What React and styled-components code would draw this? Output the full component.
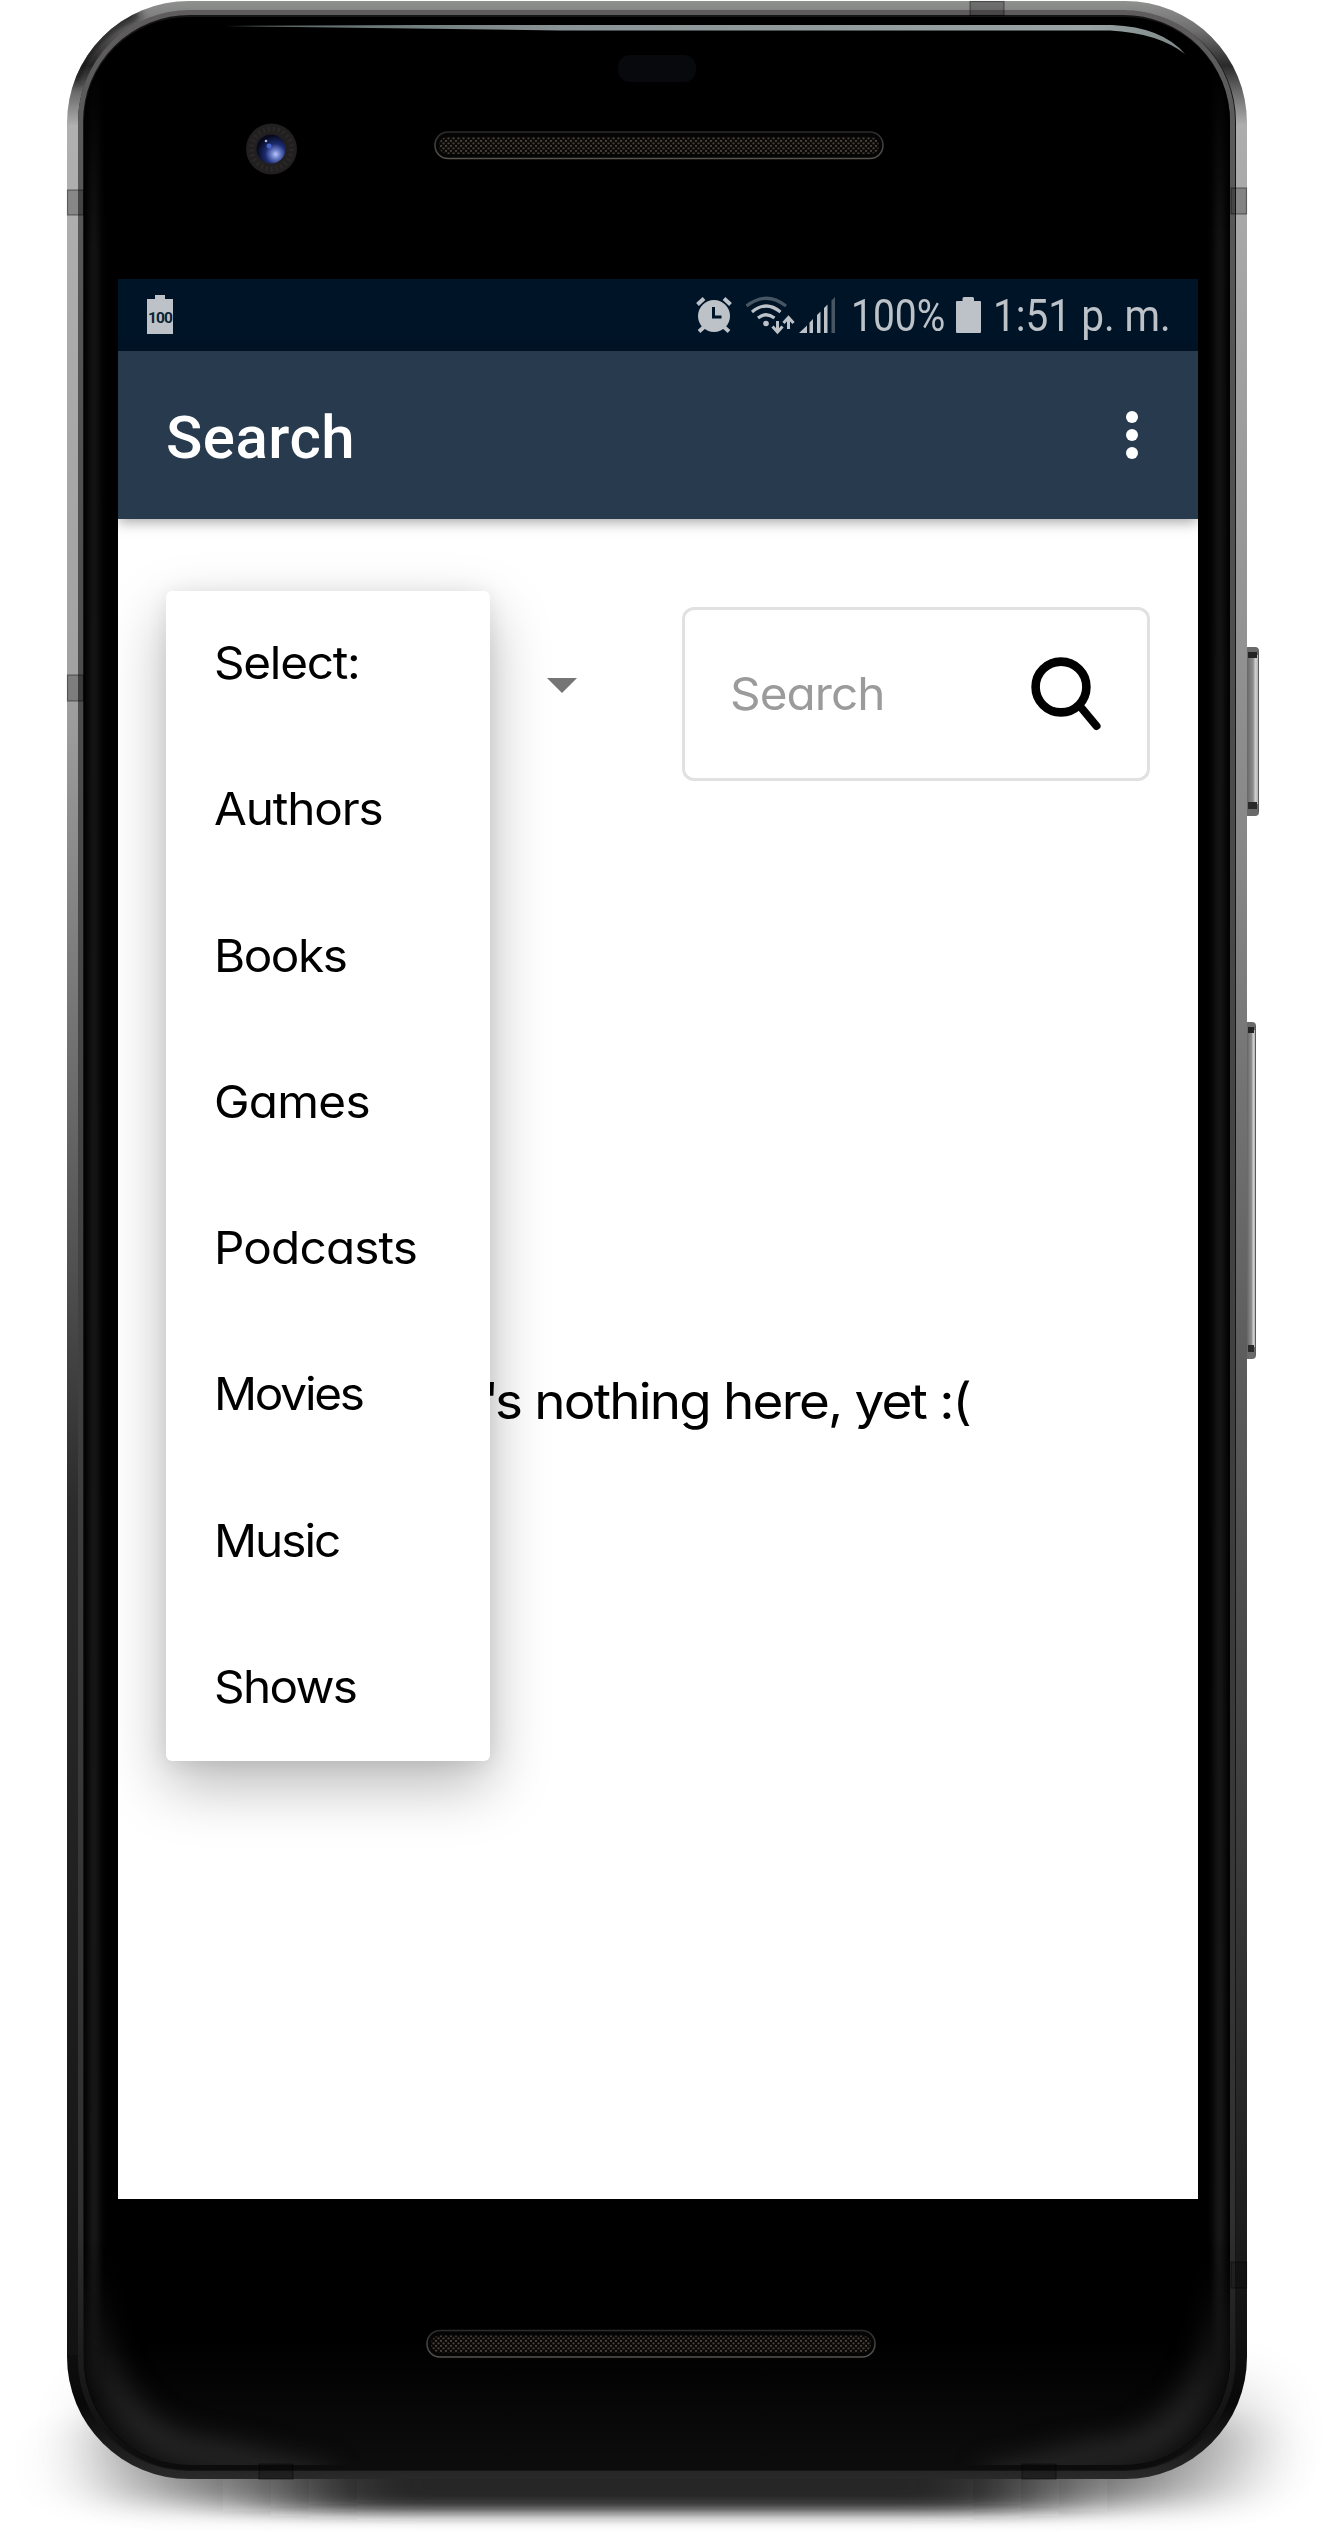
import React from 'react';
import styled, { createGlobalStyle, css } from 'styled-components';

const Global = createGlobalStyle`
  html, body { margin: 0; padding: 0; background: #fff; }
  *, *::before, *::after { box-sizing: border-box; }
`;

const bookFont = css`
  font-family: Inter, "Liberation Sans", sans-serif;
  font-weight: 380;
  font-feature-settings: "cv11";
`;

const Stage = styled.div`
  position: relative;
  width: 1330px;
  height: 2532px;
  overflow: hidden;
  background: #fff;
  display: flex;
  padding: 1px 0 0 67px;
`;

const Hardware = styled.svg`
  position: absolute;
  inset: 0;
  width: 1330px;
  height: 2532px;
`;

const Phone = styled.main`
  position: relative;
  width: 1180px;
  height: 2478px;
  padding: 278px 49px 280px 51px;
  display: flex;
  flex-direction: column;
`;

const Screen = styled.section`
  width: 1080px;
  height: 1920px;
  flex: none;
  background: #fff;
  overflow: hidden;
  display: flex;
  flex-direction: column;
`;

const StatusBar = styled.header`
  height: 72px;
  flex: none;
  background: #001427;
  color: #bcc2c7;
  display: flex;
  align-items: center;
  padding: 0 29px 0 28px;
`;

const StatusIcon = styled.svg`
  display: block;
  flex: none;
  overflow: visible;
  width: ${(p) => p.$w}px;
  height: ${(p) => p.$h}px;
  margin-left: ${(p) => p.$gap || 0}px;
`;

const StatusText = styled.span`
  flex: none;
  width: ${(p) => p.$w}px;
  margin-left: ${(p) => p.$gap}px;
  font: 400 45px/74px Roboto, sans-serif;
  height: 72px;
  white-space: pre;
  span {
    display: inline-block;
    transform: scaleX(${(p) => p.$scale});
    transform-origin: left;
  }
`;

const Spacer = styled.div`
  flex: 1;
`;

const AppBar = styled.div`
  height: 168px;
  flex: none;
  position: relative;
  background: #273a4e;
  display: flex;
  align-items: center;
  justify-content: space-between;
  padding: 4px 60px 0 48px;
  box-shadow: 0 3px 13px rgba(0, 0, 0, 0.36);
`;

const Title = styled.h1`
  margin: 0;
  padding-top: 2px;
  color: #fff;
  font: 500 60px/72px Roboto, sans-serif;
  letter-spacing: 0.5px;
`;

const Overflow = styled.button`
  border: 0;
  background: none;
  padding: 0 0 4px;
  display: flex;
  flex-direction: column;
  gap: 6px;
`;

const Dot = styled.i`
  width: 12px;
  height: 12px;
  border-radius: 50%;
  background: #fff;
`;

const Content = styled.div`
  flex: 1;
  position: relative;
  display: flex;
  flex-direction: column;
`;

const Filters = styled.div`
  display: flex;
  justify-content: flex-end;
  align-items: flex-start;
  padding: 88px 48px 0 0;
`;

const Caret = styled.svg`
  width: 30px;
  height: 15px;
  margin: 71px 105px 0 0;
`;

const SearchBox = styled.div`
  width: 468px;
  height: 174px;
  border: 3px solid #e1e1e1;
  border-radius: 12px;
  display: flex;
  align-items: center;
  justify-content: space-between;
  padding: 0 45px 1px 45px;
`;

const WideText = styled.span`
  display: inline-block;
  transform: scaleX(1.06);
  transform-origin: ${(p) => p.$from || 'left'};
  letter-spacing: ${(p) => p.$track}px;
`;

const Apostrophe = styled.span`
  letter-spacing: -4px;
`;

const Placeholder = styled.span`
  ${bookFont}
  font-size: 45px;
  line-height: 60px;
  color: #9b9b9b;
`;

const Glass = styled.svg`
  width: 72px;
  height: 76px;
`;

const Empty = styled.p`
  ${bookFont}
  margin: 586px 228px 0 0;
  text-align: right;
  font-size: 50px;
  line-height: 68px;
  color: #000;
  white-space: nowrap;
`;

const Menu = styled.ul`
  position: absolute;
  left: 48px;
  top: 72px;
  width: 324px;
  margin: 0;
  padding: 0;
  list-style: none;
  background: #fff;
  border-radius: 6px;
  box-shadow: 0 24px 60px rgba(0, 0, 0, 0.28), 0 2px 20px rgba(0, 0, 0, 0.08);
`;

const Item = styled.li`
  ${bookFont}
  height: 146.25px;
  padding: 0 0 0 47.5px;
  font-size: 45px;
  line-height: 144px;
  color: #000;
  white-space: nowrap;
`;

const ITEMS = [
  ['Select:', -1.2],
  ['Authors', -1.1],
  ['Books', -1.4],
  ['Games', -0.7],
  ['Podcasts', -0.8],
  ['Movies', -2.1],
  ['Music', -1.9],
  ['Shows', -1.6],
];

function Speaker({ x, y }) {
  return (
    <g>
      <rect x={x} y={y} width="448" height="26.500" rx="13" fill="#050505" stroke="url(#rim)" strokeWidth="1.600" />
      <rect x={x + 4} y={y + 5} width="440" height="17" rx="8.500" fill="url(#mesh)" />
    </g>
  );
}

function SideButton({ y, w, h }) {
  return (
    <g>
      <rect x="1244" y={y} width={w + 3} height={h} rx="4" fill="#6a6a6a" />
      <rect x="1248" y={y + 8} width={w - 2} height={h - 20} fill="url(#button)" />
      <rect x="1248" y={y + 5} width={w - 3} height="6" fill="#222" />
      <rect x="1248" y={y + h - 14} width={w - 3} height="7" fill="#2a2a2a" />
      <rect x={1247 + w - 1} y={y + 4} width="1" height={h - 8} fill="#5a5a5a" />
    </g>
  );
}

function Body() {
  return (
    <Hardware viewBox="0 0 1330 2532" aria-hidden="true">
      <defs>
        <linearGradient id="metal" x1="0" y1="0" x2="0" y2="1">
          <stop offset="0" stopColor="#8f918f" />
          <stop offset="0.012" stopColor="#6e6e6e" />
          <stop offset="0.026" stopColor="#2a2a2a" />
          <stop offset="0.036" stopColor="#666" />
          <stop offset="0.05" stopColor="#adadad" />
          <stop offset="0.15" stopColor="#a0a0a0" />
          <stop offset="0.35" stopColor="#868686" />
          <stop offset="0.55" stopColor="#5c5c5c" />
          <stop offset="0.75" stopColor="#3a3a3a" />
          <stop offset="0.9" stopColor="#1c1c1c" />
          <stop offset="0.97" stopColor="#080808" />
          <stop offset="1" stopColor="#2a2a2a" />
        </linearGradient>
        <linearGradient id="metalLeft" x1="0" y1="0" x2="0" y2="1">
          <stop offset="0" stopColor="#b0b0b0" />
          <stop offset="0.25" stopColor="#a2a2a2" />
          <stop offset="0.45" stopColor="#666" />
          <stop offset="0.62" stopColor="#2b2b2b" />
          <stop offset="0.9" stopColor="#191919" />
          <stop offset="1" stopColor="#121212" />
        </linearGradient>
        <linearGradient id="lip" x1="0" y1="0" x2="0" y2="1">
          <stop offset="0" stopColor="#5e5c5c" />
          <stop offset="0.3" stopColor="#4c4c4c" />
          <stop offset="0.9" stopColor="#303030" />
          <stop offset="1" stopColor="#0c0c0c" />
        </linearGradient>
        <linearGradient id="glow" x1="0" y1="0" x2="0" y2="1">
          <stop offset="0" stopColor="#000" />
          <stop offset="1" stopColor="#0d0d0d" />
        </linearGradient>
        <linearGradient id="edge" gradientUnits="userSpaceOnUse" x1="0" y1="60" x2="0" y2="2400">
          <stop offset="0" stopColor="#000" />
          <stop offset="0.08" stopColor="#151515" />
          <stop offset="0.93" stopColor="#1b1b1b" />
          <stop offset="1" stopColor="#1b1b1b" stopOpacity="0" />
        </linearGradient>
        <linearGradient id="corner" gradientUnits="userSpaceOnUse" x1="0" y1="2260" x2="0" y2="2430">
          <stop offset="0" stopColor="#262626" stopOpacity="0" />
          <stop offset="1" stopColor="#262626" />
        </linearGradient>
        <linearGradient id="glare" x1="0" y1="0" x2="1" y2="0">
          <stop offset="0" stopColor="#54605f" />
          <stop offset="0.35" stopColor="#8a9496" />
          <stop offset="0.9" stopColor="#9aa4a5" />
          <stop offset="1" stopColor="#7d8788" />
        </linearGradient>
        <linearGradient id="rim" x1="0" y1="0" x2="0" y2="1">
          <stop offset="0" stopColor="#2b2b2b" />
          <stop offset="1" stopColor="#57524e" />
        </linearGradient>
        <linearGradient id="button" x1="0" y1="0" x2="1" y2="0">
          <stop offset="0" stopColor="#6f6f6f" />
          <stop offset="0.5" stopColor="#8c8c8c" />
          <stop offset="0.75" stopColor="#d0d0d0" />
          <stop offset="1" stopColor="#b5b5b5" />
        </linearGradient>
        <radialGradient id="lens" cx="0.66" cy="0.68" r="0.65">
          <stop offset="0" stopColor="#b9c5f8" />
          <stop offset="0.25" stopColor="#6578c4" />
          <stop offset="0.55" stopColor="#1c2b70" />
          <stop offset="1" stopColor="#060a1c" />
        </radialGradient>
        <pattern id="mesh" width="5" height="5" patternUnits="userSpaceOnUse">
          <rect width="5" height="5" fill="#0a0908" />
          <rect x="0" y="0" width="2" height="1.800" fill="#4b453b" />
          <rect x="2.500" y="2.500" width="2" height="1.800" fill="#4b453b" />
        </pattern>
        <filter id="blur3" filterUnits="userSpaceOnUse" x="40" y="-20" width="220" height="220"><feGaussianBlur stdDeviation="5" /></filter>
        <filter id="blur4" colorInterpolationFilters="sRGB" filterUnits="userSpaceOnUse" x="60" y="0" width="1200" height="2500"><feGaussianBlur stdDeviation="3.500" /></filter>
        <filter id="blur12" colorInterpolationFilters="sRGB" filterUnits="userSpaceOnUse" x="0" y="2100" width="1330" height="460"><feGaussianBlur stdDeviation="13" /></filter>
        <filter id="core" filterUnits="userSpaceOnUse" x="0" y="2300" width="1330" height="232"><feGaussianBlur stdDeviation="60 8" /></filter>
        <filter id="mid" filterUnits="userSpaceOnUse" x="0" y="2300" width="1330" height="232"><feGaussianBlur stdDeviation="55 12" /></filter>
        <filter id="haze" filterUnits="userSpaceOnUse" x="0" y="2200" width="1330" height="332"><feGaussianBlur stdDeviation="32 30" /></filter>
        <clipPath id="bodyClip"><rect x="67" y="1" width="1180" height="2478" rx="122" /></clipPath>
        <clipPath id="glassClip"><rect x="84" y="17" width="1146" height="2448" rx="106" /></clipPath>
      </defs>

      <rect x="90" y="2390" width="1180" height="85" rx="50" fill="#000" opacity="0.18" filter="url(#haze)" />
      <rect x="130" y="2420" width="1070" height="86" rx="30" fill="#000" opacity="0.42" filter="url(#mid)" />
      <rect x="290" y="2420" width="750" height="91" fill="#202020" opacity="0.96" filter="url(#core)" />

      <SideButton y={647} w={12} h={169} />
      <SideButton y={1022} w={9} h={337} />

      <g clipPath="url(#bodyClip)">
        <rect x="67" y="1" width="1180" height="2478" fill="url(#metal)" />
        <rect x="67" y="125" width="13" height="2230" fill="url(#metalLeft)" />
        <path d="M72 82Q86 30 138 12" fill="none" stroke="#141414" strokeWidth="16" opacity="0.85" filter="url(#blur3)" />
      </g>
      <rect x="78" y="11" width="1158" height="2460" rx="111" fill="#151515" />
      <rect x="80.500" y="12.500" width="1152" height="2455" rx="109" fill="none" stroke="url(#lip)" strokeWidth="5" />
      <rect x="84" y="17" width="1146" height="2448" rx="105" fill="#000" />
      <g clipPath="url(#glassClip)">
        <rect x="84" y="2340" width="1146" height="130" fill="url(#glow)" />
        <path d="M94 60V2400M1219.500 60V2400" fill="none" stroke="url(#edge)" strokeWidth="10" filter="url(#blur4)" />
        <path d="M88 2250Q88 2450 220 2456L330 2484" fill="none" stroke="url(#corner)" strokeWidth="30" filter="url(#blur12)" />
        <path d="M1226 2250Q1226 2450 1094 2456L984 2484" fill="none" stroke="url(#corner)" strokeWidth="30" filter="url(#blur12)" />
      </g>
      <path d="M225 26L420 25H1112Q1162 27 1185 54Q1158 33 1110 30.500H560Z" fill="url(#glare)" />

      <g fill="#000" fillOpacity="0.22" stroke="#000" strokeOpacity="0.4" strokeWidth="1.200">
        <rect x="67.500" y="190" width="16" height="25" />
        <rect x="67.500" y="675" width="16" height="26" />
        <rect x="1231" y="188" width="15.500" height="26" />
        <rect x="1231" y="2262" width="15.500" height="26" />
        <rect x="970" y="1.500" width="34" height="14" />
        <rect x="259" y="2464" width="34" height="15" />
        <rect x="1022" y="2464" width="34" height="15" />
      </g>

      <rect x="618" y="55" width="78" height="27" rx="12" fill="#08090d" />
      <Speaker x={435} y={132} />
      <Speaker x={427} y={2330.5} />
      <circle cx="271.500" cy="149" r="25.500" fill="#211f1f" />
      <circle cx="271.500" cy="149" r="20" fill="none" stroke="#2b2828" strokeWidth="5" strokeDasharray="2 3" />
      <circle cx="271" cy="149" r="14.500" fill="url(#lens)" />
      <circle cx="269" cy="146" r="2.500" fill="#4562c4" />
      <circle cx="266" cy="141" r="1.300" fill="#a9b6e6" />
    </Hardware>
  );
}

function Status() {
  return (
    <StatusBar>
      <StatusIcon $w={28} $h={40} viewBox="0 0 28 40">
        <path d="M1 4H9V0H19V4H27V39H1Z" fill="#bcc2c7" />
        <text x="14" y="27.500" textAnchor="middle" fontFamily="Roboto, sans-serif" fontWeight="700" fontSize="15.500" letterSpacing="-0.900" fill="#0b2233">100</text>
      </StatusIcon>
      <Spacer />
      <StatusIcon $w={36} $h={36} viewBox="0 0 36 36">
        <circle cx="18" cy="19" r="16" fill="currentColor" />
        <path d="M1.500 7.500L8 1.500M34.500 7.500L28 1.500M3 34.500L8 30M33 34.500L28 30" stroke="currentColor" strokeWidth="4" />
        <path d="M17.500 10V20H25.500" fill="none" stroke="#001427" strokeWidth="3" />
      </StatusIcon>
      <StatusIcon $w={50} $h={36} $gap={13} viewBox="0 0 50 36">
        <g fill="none" stroke="currentColor" strokeWidth="3.200">
          <path d="M1.500 9Q21 -6.500 41 9" opacity="0.38" />
          <path d="M7 15Q21 3 35.500 15" />
          <path d="M13 21Q21 14.500 29.500 21" />
        </g>
        <circle cx="21" cy="26.500" r="2.800" fill="currentColor" />
        <path d="M32.500 24V34M27.500 29.500L32.500 35L37.500 29.500M43.500 32V21M38.500 26L43.500 20.500L48.500 26" fill="none" stroke="currentColor" strokeWidth="3" />
      </StatusIcon>
      <StatusIcon $w={37} $h={36} $gap={4} viewBox="0 0 37 36">
        <path d="M0 36L8 28.500V36ZM10.500 36V25.500L14 22V36ZM18 36V18L21.500 14.500V36ZM25 36V11L28.500 7.500V36Z" fill="currentColor" />
        <path d="M32.500 36V3.500L36 0V36Z" fill="currentColor" opacity="0.38" />
      </StatusIcon>
      <StatusText $w={94} $gap={15} $scale={0.865}><span>100%</span></StatusText>
      <StatusIcon $w={25} $h={36} $gap={11} viewBox="0 0 25 36">
        <path d="M1 4H6.500V1.500Q6.500 0 8 0H16.500Q18 0 18 1.500V4H24Q25 4 25 5V35Q25 36 24 36H1Q0 36 0 35V5Q0 4 1 4Z" fill="currentColor" />
      </StatusIcon>
      <StatusText $w={176} $gap={12} $scale={0.9}><span>1:51 p. m.</span></StatusText>
    </StatusBar>
  );
}

export default function App() {
  return (
    <>
      <Global />
      <Stage>
        <Body />
        <Phone>
          <Screen>
            <Status />
            <AppBar>
              <Title>Search</Title>
              <Overflow aria-label="More options"><Dot /><Dot /><Dot /></Overflow>
            </AppBar>
            <Content>
              <Filters>
                <Caret viewBox="0 0 30 15"><path d="M0 0H30L15 15Z" fill="#757575" /></Caret>
                <SearchBox>
                  <Placeholder><WideText $track={-0.9}>Search</WideText></Placeholder>
                  <Glass viewBox="0 0 72 76">
                    <circle cx="31" cy="31" r="25.400" fill="none" stroke="#000" strokeWidth="8.600" />
                    <path d="M49 49L66.500 70" stroke="#000" strokeWidth="8" strokeLinecap="round" />
                  </Glass>
                </SearchBox>
              </Filters>
              <Empty>
                <WideText $track={-1.72} $from="right"><Apostrophe>'</Apostrophe>s nothing here, yet :(</WideText>
              </Empty>
              <Menu>
                {ITEMS.map(([label, track]) => (
                  <Item key={label}><WideText $track={track}>{label}</WideText></Item>
                ))}
              </Menu>
            </Content>
          </Screen>
        </Phone>
      </Stage>
    </>
  );
}
